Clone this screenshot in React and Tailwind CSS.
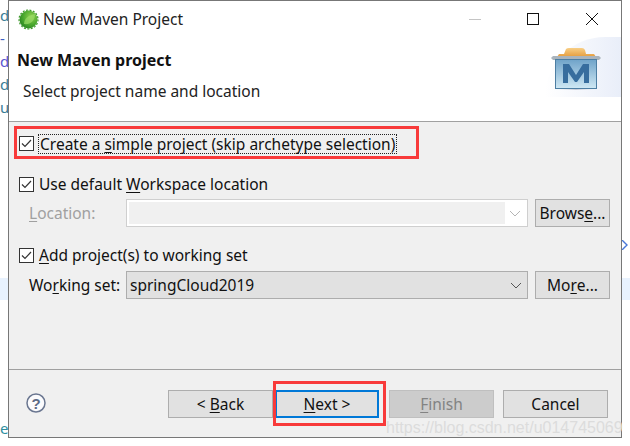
const font = { fontFamily: '"Noto Sans", sans-serif' }

function Check() {
  return (
    <svg width="15" height="15" viewBox="0 0 15 15" className="shrink-0">
      <rect x="0.5" y="0.5" width="14" height="14" fill="#fff" stroke="#333" />
      <path d="M3 7.5 L6 10.5 L12 4" fill="none" stroke="#333" strokeWidth="1.2" />
    </svg>
  )
}

function Chevron({ color }) {
  return (
    <svg width="12" height="7" viewBox="0 0 12 7">
      <path d="M1 1 L6 6 L11 1" fill="none" stroke={color} />
    </svg>
  )
}

function Btn({ children, className = '' }) {
  return (
    <div className={`h-[28px] flex items-center justify-center border border-[#adadad] bg-[#e1e1e1] text-[15.5px] text-[#111] ${className}`}>
      {children}
    </div>
  )
}

function SpringIcon() {
  return (
    <svg width="21" height="21" viewBox="0 0 21 21" className="shrink-0">
      <defs>
        <radialGradient id="sg" cx="0.65" cy="0.35" r="0.8">
          <stop offset="0" stopColor="#8fd14f" />
          <stop offset="0.55" stopColor="#4aa82e" />
          <stop offset="1" stopColor="#1f7a1e" />
        </radialGradient>
      </defs>
      <circle cx="10.5" cy="10.5" r="9" fill="url(#sg)" />
      <circle cx="10.5" cy="10.5" r="9.5" fill="none" stroke="#3f9a2c" strokeWidth="1.2" strokeDasharray="2 1.5" />
      <path d="M6 15 C6 9 11 6 17 5 C17 12 12 16 6 15 Z" fill="#9bdc68" opacity="0.7" />
    </svg>
  )
}

function MavenIcon() {
  return (
    <svg width="50" height="44" viewBox="0 0 50 44">
      <defs>
        <linearGradient id="mb" x1="0" y1="0" x2="0" y2="1">
          <stop offset="0" stopColor="#6fa3c9" />
          <stop offset="1" stopColor="#cfe8f4" />
        </linearGradient>
        <linearGradient id="mc" x1="0" y1="0" x2="0" y2="1">
          <stop offset="0" stopColor="#f8cf86" />
          <stop offset="1" stopColor="#e59b3c" />
        </linearGradient>
        <linearGradient id="ms" x1="0" y1="0" x2="1" y2="0">
          <stop offset="0" stopColor="#ffffff" stopOpacity="0" />
          <stop offset="0.5" stopColor="#c8ccd8" />
          <stop offset="1" stopColor="#ffffff" stopOpacity="0" />
        </linearGradient>
      </defs>
      <rect x="0" y="41" width="50" height="2" fill="url(#ms)" />
      <path d="M6 10 L8 7 L13 7 L15 2 Q16 1 18 1 L31 1 Q33 1 34 3 L35 7 L43 7 L45 10 Z" fill="url(#mc)" />
      <path d="M0 11 L2 9 L48 9 L50 11 L48 13 L2 13 Z" fill="#aab4bc" />
      <rect x="4.5" y="12.5" width="41" height="29" fill="url(#mb)" stroke="#4d7ea3" />
      <path d="M12 36 L12 17 L18 17 L25 28 L32 17 L38 17 L38 36 L33 36 L33 25 L26 35 L24 35 L17 25 L17 36 Z" fill="#376d9e" />
    </svg>
  )
}

export default function App() {
  return (
    <div className="relative w-[630px] h-[446px] overflow-hidden bg-white flex text-[15.5px] leading-5 text-[#111]" style={font}>
      {/* what shows of the editor behind the dialog */}
      <div className="w-[8px] h-full overflow-hidden shrink-0 flex flex-col text-[15px] leading-[23px] text-[#3a7d96]">
        <div className="h-[4px] shrink-0" />
        <div>d</div>
        <div className="text-[#3f5fc4]">-</div>
        <div className="text-[#5a56d0]">d</div>
        <div>d</div>
        <div>u</div>
        <div className="h-[159px] shrink-0" />
        <div className="h-[22px] shrink-0 bg-[#e8f2fe]" />
        <div className="h-[117px] shrink-0" />
        <div className="text-[#2f8f9f]">e</div>
      </div>

      <div className="w-[614px] h-[438px] shrink-0 flex flex-col border border-[#777] bg-[#f0f0f0]">
        <div className="h-[121px] shrink-0 bg-white border-b border-[#a0a0a0] flex flex-col relative">
          <div className="h-[36px] flex items-center pl-[9px]">
            <SpringIcon />
            <span className="ml-[4px] text-[#222]">New Maven Project</span>
            <div className="ml-auto flex items-center">
              <div className="w-[12px] h-px bg-[#c4c4c4] mr-[46px]" />
              <div className="w-[12px] h-[12px] border border-[#111] mr-[47px]" />
              <svg width="12" height="12" viewBox="0 0 12 12" className="mr-[23px]">
                <path d="M0 0 L12 12 M12 0 L0 12" stroke="#111" />
              </svg>
            </div>
          </div>
          <div className="pl-[8px] mt-[13px] font-bold text-[16px]">New Maven project</div>
          <div className="pl-[14px] mt-[11px] text-[#222]">Select project name and location</div>
          <div className="absolute right-0 top-[36px] w-[76px] h-[60px] bg-gradient-to-r from-white to-[#e9eef9] rounded-tl-[70px]" />
          <div className="absolute right-[20px] top-[46px]"><MavenIcon /></div>
        </div>

        <div className="flex-1 flex flex-col">
          <div className="h-[31px] mt-[6px] flex items-center pl-[10px]">
            <Check />
            <span className="ml-[4px] px-px border border-dotted border-[#222] h-[20px] flex items-center">
              <span>Create a <span className="underline underline-offset-2">s</span>imple project (skip archetype selection)</span>
            </span>
          </div>
          <div className="h-[20px] mt-[15px] flex items-center pl-[10px]">
            <Check />
            <span className="ml-[5px]">Use default <span className="underline underline-offset-2">W</span>orkspace location</span>
          </div>
          <div className="h-[28px] mt-[5px] flex items-center">
            <span className="w-[117px] pl-[20px] text-[#a0a0a0]"><span className="underline underline-offset-2">L</span>ocation:</span>
            <div className="w-[402px] h-[28px] border border-[#cfcfcf] bg-white flex items-center p-[2px]">
              <div className="w-[376px] h-full bg-[#f0f0f0]" />
              <div className="flex-1 flex justify-center"><Chevron color="#b5b5b5" /></div>
            </div>
            <Btn className="ml-[7px] w-[75px]">Brows<span className="underline underline-offset-2">e</span>...</Btn>
          </div>
          <div className="h-[20px] mt-[18px] flex items-center pl-[10px]">
            <Check />
            <span className="ml-[5px]"><span className="underline underline-offset-2">A</span>dd project(s) to working set</span>
          </div>
          <div className="h-[28px] mt-[6px] flex items-center">
            <span className="w-[117px] pl-[20px]">Wo<span className="underline underline-offset-2">r</span>king set:</span>
            <div className="w-[402px] h-[28px] border border-[#adadad] bg-[#e1e1e1] flex items-center pl-[3px]">
              <span className="flex-1">springCloud2019</span>
              <div className="w-[23px] flex justify-center"><Chevron color="#555" /></div>
            </div>
            <Btn className="ml-[7px] w-[75px]">Mo<span className="underline underline-offset-2">r</span>e...</Btn>
          </div>
        </div>

        <div className="h-[68px] shrink-0 border-t border-[#a0a0a0] flex items-start pt-[20px]">
          <svg width="20" height="20" viewBox="0 0 20 20" className="ml-[17px] mt-[3px]">
            <circle cx="10" cy="10" r="9" fill="#fbfbfd" stroke="#6a7690" strokeWidth="1.5" />
            <text x="10" y="15.5" textAnchor="middle" fontSize="15" fontWeight="700" fill="#5d6a86" fontFamily="Liberation Sans, sans-serif">?</text>
          </svg>
          <Btn className="ml-[122px] w-[105px]">&lt; <span className="underline underline-offset-2 ml-1">B</span>ack</Btn>
          <Btn className="ml-[2px] w-[104px] !border-2 !border-[#0078d7]"><span className="underline underline-offset-2">N</span>ext &gt;</Btn>
          <Btn className="ml-[10px] w-[105px] !bg-[#cccccc] !border-[#bfbfbf] !text-[#838383]"><span className="underline underline-offset-2">F</span>inish</Btn>
          <Btn className="ml-[9px] w-[105px]">Cancel</Btn>
        </div>
      </div>

      <div className="flex-1 h-full flex flex-col">
        <div className="h-[240px] shrink-0" />
        <svg width="6" height="10" viewBox="0 0 6 10" className="shrink-0"><path d="M0 0 L5 5 L0 10" fill="none" stroke="#4a78d8" strokeWidth="1.4" /></svg>
        <div className="h-[28px] shrink-0" />
        <div className="h-[22px] shrink-0 bg-[#e8f2fe]" />
      </div>

      {/* annotations pasted over the screenshot */}
      <div className="absolute left-[14px] top-[126px] w-[405px] h-[33px] border-[3px] border-[#f83a3a]" />
      <div className="absolute left-[273px] top-[381px] w-[113px] h-[45px] border-[3px] border-[#f83a3a]" />
      <div className="absolute left-[386px] top-[416px] text-[16px] leading-6 text-[#dcdcdc]" style={{ fontFamily: '"Liberation Sans", sans-serif' }}>
        https://blog.csdn.net/u014745069
      </div>
    </div>
  )
}
